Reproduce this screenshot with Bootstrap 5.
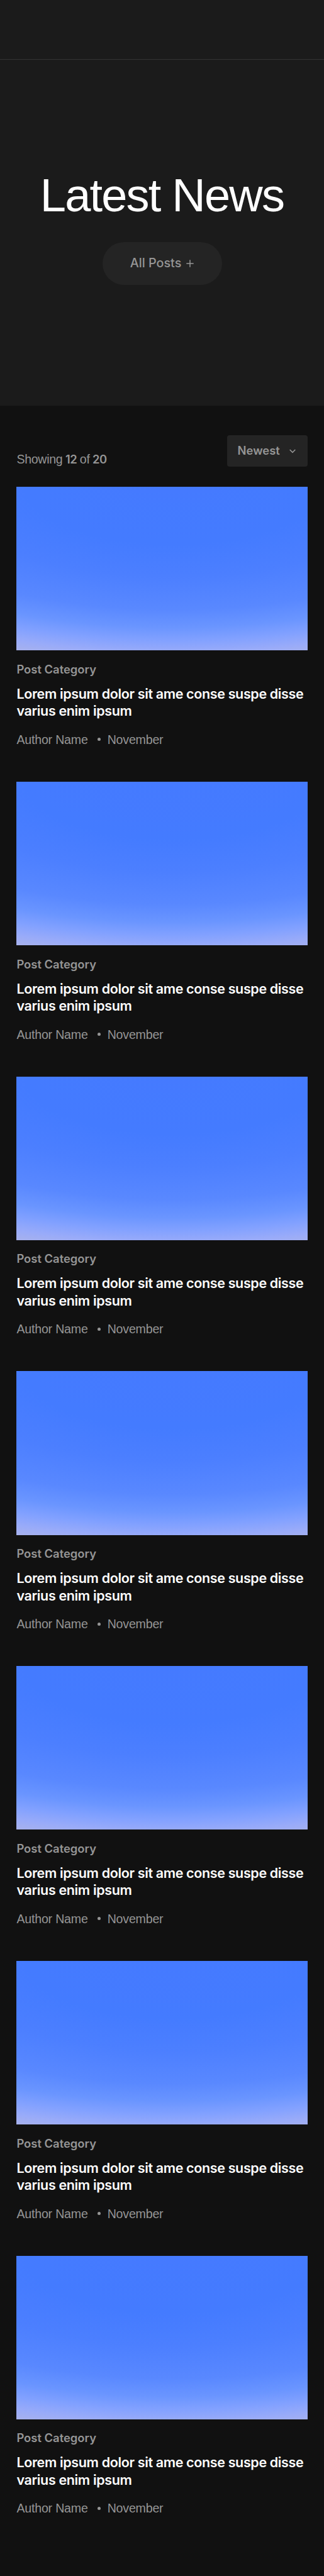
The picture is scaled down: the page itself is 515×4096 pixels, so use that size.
<!DOCTYPE html>
<html lang="en">
<head>
    <meta charset="UTF-8">
    <meta name="viewport" content="width=device-width, initial-scale=1.0">
    <title>Latest News</title>
    <link rel="stylesheet" href="https://cdn.jsdelivr.net/npm/bootstrap@5.3.0/dist/css/bootstrap.min.css">
    <style>
        body {
            background: #111;
            color: #959595;
            font-family: 'Liberation Sans', Arial, sans-serif;
            font-size: 19.6px;
            line-height: 24px;
            letter-spacing: -0.2px;
        }
        .site-header {
            height: 95px;
            background: #1b1b1b;
            border-bottom: 1px solid #333;
        }
        .hero {
            height: 549.5px;
            padding-top: 176px;
            background: #1b1b1b;
        }
        .hero h1 {
            font-size: 74px;
            font-weight: 400;
            line-height: 80px;
            letter-spacing: -1.8px;
            margin-bottom: 34px;
        }
        .btn-filter, .btn-sort, .count, .post-category, .post-title {
            font-family: Inter, 'Liberation Sans', sans-serif;
        }
        .btn-filter {
            --bs-btn-color: #959595;
            --bs-btn-bg: #242424;
            --bs-btn-hover-color: #fff;
            --bs-btn-hover-bg: #2e2e2e;
            width: 190px;
            height: 68px;
            font-size: 19.8px;
            font-weight: 500;
            letter-spacing: 0;
        }
        .news {
            padding: 47.6px 26.4px 80px;
        }
        .toolbar {
            height: 50px;
            margin-bottom: 32px;
        }
        .showing {
            word-spacing: -0.7px;
            letter-spacing: -0.3px;
        }
        .count {
            font-size: 18.4px;
            font-weight: 600;
            letter-spacing: -0.4px;
        }
        .btn-sort {
            --bs-btn-color: #959595;
            --bs-btn-bg: #242424;
            --bs-btn-hover-color: #fff;
            --bs-btn-hover-bg: #2e2e2e;
            --bs-btn-border-radius: 4px;
            width: 128px;
            height: 50px;
            padding: 0 18.5px 0 17px;
            font-size: 18.4px;
            font-weight: 600;
            letter-spacing: 0;
        }
        .post {
            height: 468.75px;
        }
        .post-image {
            height: 260.2px;
            margin-bottom: 17.7px;
            background: radial-gradient(145% 100% at 54% 0, #457aff 0%, #447bff 35%, #4c7fff 55%, #5988ff 75%, #6a95ff 86%, #82a1ff 94%, #99abf9 101%, #a8b2ec 107%);
        }
        .post-category {
            font-size: 18.4px;
            font-weight: 600;
            letter-spacing: 0;
            margin-bottom: 14px;
        }
        .post-title {
            font-size: 21.5px;
            font-weight: 600;
            line-height: 27.5px;
            letter-spacing: -0.36px;
            margin-bottom: 19px;
        }
        .dot {
            width: 5px;
            height: 5px;
            background: #959595;
            margin: 0 11px 0 15px;
        }
    </style>
</head>
<body>

    <header class="site-header"></header>

    <section class="hero text-center">
        <h1 class="text-white">Latest News</h1>
        <button type="button" class="btn btn-filter border-0 rounded-pill p-0 d-inline-flex align-items-center justify-content-center gap-2">
            All Posts
            <svg width="12" height="12" viewBox="0 0 12 12" fill="none" stroke="currentColor" stroke-width="1.5">
                <path d="M6 0.3v11.4M0.3 6h11.4"/>
            </svg>
        </button>
    </section>

    <main class="news">
        <div class="toolbar d-flex justify-content-between align-items-end">
            <div class="showing">Showing <span class="count">12</span> of <span class="count">20</span></div>
            <button type="button" class="btn btn-sort border-0 d-flex align-items-center justify-content-between">
                Newest
                <svg width="10" height="7" viewBox="0 0 10 7" fill="none" stroke="currentColor" stroke-width="1.6">
                    <path d="M0.7 1L5 5.3L9.3 1"/>
                </svg>
            </button>
        </div>
        <div id="postList"></div>
    </main>

    <script>
        const posts = Array.from({ length: 7 }, () => ({
            category: "Post Category",
            title: "Lorem ipsum dolor sit ame conse suspe disse varius enim ipsum",
            author: "Author Name",
            date: "November"
        }));

        function displayPosts() {
            document.getElementById("postList").innerHTML = posts.map(post => `
                <article class="post">
                    <div class="post-image"></div>
                    <div class="post-category">${post.category}</div>
                    <h2 class="post-title text-white">${post.title}</h2>
                    <div class="d-flex align-items-center">
                        <span>${post.author}</span>
                        <span class="dot rounded-circle"></span>
                        <span>${post.date}</span>
                    </div>
                </article>`).join("");
        }

        displayPosts();
    </script>
    <script src="https://cdn.jsdelivr.net/npm/bootstrap@5.3.0/dist/js/bootstrap.bundle.min.js"></script>
</body>
</html>
